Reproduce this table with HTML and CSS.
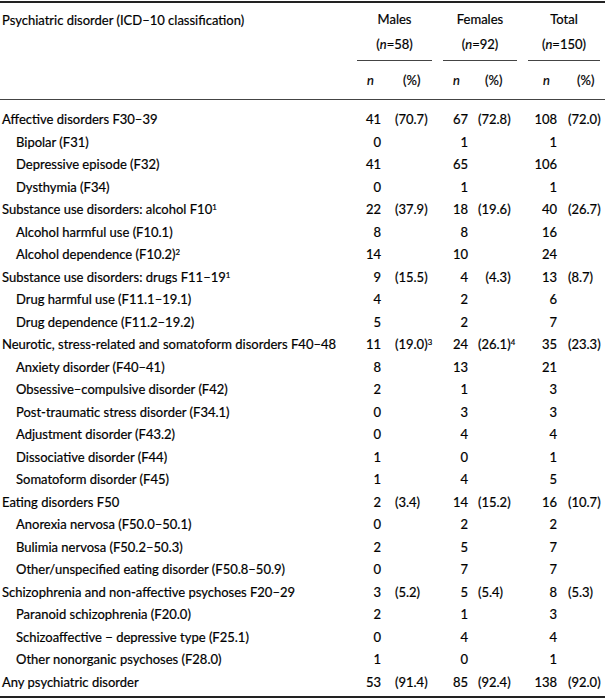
FILE: index.html
```html
<!DOCTYPE html>
<html>
<head>
<meta charset="utf-8">
<link rel="stylesheet" href="styles.css">
</head>
<body>
<div class="tbl">
  <div class="head">
    <div class="hlabel">Psychiatric disorder (ICD–10 classification)</div>
    <div class="grp g-m"><div class="gname">Males</div><div class="gn">(<i>n</i>=58)</div></div>
    <div class="grp g-f"><div class="gname">Females</div><div class="gn">(<i>n</i>=92)</div></div>
    <div class="grp g-t"><div class="gname">Total</div><div class="gn">(<i>n</i>=150)</div></div>
    <div class="sub s-mn"><i>n</i></div><div class="sub s-mp">(%)</div>
    <div class="sub s-fn"><i>n</i></div><div class="sub s-fp">(%)</div>
    <div class="sub s-tn"><i>n</i></div><div class="sub s-tp">(%)</div>
  </div>
  <div class="body">
    <div class="row"><div class="lab">Affective disorders F30–39</div><div class="n">41</div><div class="p pm">(70.7)</div><div class="n">67</div><div class="p pf">(72.8)</div><div class="n">108</div><div class="p pt">(72.0)</div></div>
    <div class="row"><div class="lab ind">Bipolar (F31)</div><div class="n">0</div><div class="p pm"></div><div class="n">1</div><div class="p pf"></div><div class="n">1</div><div class="p pt"></div></div>
    <div class="row"><div class="lab ind">Depressive episode (F32)</div><div class="n">41</div><div class="p pm"></div><div class="n">65</div><div class="p pf"></div><div class="n">106</div><div class="p pt"></div></div>
    <div class="row"><div class="lab ind">Dysthymia (F34)</div><div class="n">0</div><div class="p pm"></div><div class="n">1</div><div class="p pf"></div><div class="n">1</div><div class="p pt"></div></div>
    <div class="row"><div class="lab">Substance use disorders: alcohol F10<sup>1</sup></div><div class="n">22</div><div class="p pm">(37.9)</div><div class="n">18</div><div class="p pf">(19.6)</div><div class="n">40</div><div class="p pt">(26.7)</div></div>
    <div class="row"><div class="lab ind">Alcohol harmful use (F10.1)</div><div class="n">8</div><div class="p pm"></div><div class="n">8</div><div class="p pf"></div><div class="n">16</div><div class="p pt"></div></div>
    <div class="row"><div class="lab ind">Alcohol dependence (F10.2)<sup>2</sup></div><div class="n">14</div><div class="p pm"></div><div class="n">10</div><div class="p pf"></div><div class="n">24</div><div class="p pt"></div></div>
    <div class="row"><div class="lab">Substance use disorders: drugs F11–19<sup>1</sup></div><div class="n">9</div><div class="p pm">(15.5)</div><div class="n">4</div><div class="p pf">&#8199;(4.3)</div><div class="n">13</div><div class="p pt">(8.7)</div></div>
    <div class="row"><div class="lab ind">Drug harmful use (F11.1–19.1)</div><div class="n">4</div><div class="p pm"></div><div class="n">2</div><div class="p pf"></div><div class="n">6</div><div class="p pt"></div></div>
    <div class="row"><div class="lab ind">Drug dependence (F11.2–19.2)</div><div class="n">5</div><div class="p pm"></div><div class="n">2</div><div class="p pf"></div><div class="n">7</div><div class="p pt"></div></div>
    <div class="row"><div class="lab">Neurotic, stress-related and somatoform disorders F40–48</div><div class="n">11</div><div class="p pm">(19.0)<sup>3</sup></div><div class="n">24</div><div class="p pf">(26.1)<sup>4</sup></div><div class="n">35</div><div class="p pt">(23.3)</div></div>
    <div class="row"><div class="lab ind">Anxiety disorder (F40–41)</div><div class="n">8</div><div class="p pm"></div><div class="n">13</div><div class="p pf"></div><div class="n">21</div><div class="p pt"></div></div>
    <div class="row"><div class="lab ind">Obsessive–compulsive disorder (F42)</div><div class="n">2</div><div class="p pm"></div><div class="n">1</div><div class="p pf"></div><div class="n">3</div><div class="p pt"></div></div>
    <div class="row"><div class="lab ind">Post-traumatic stress disorder (F34.1)</div><div class="n">0</div><div class="p pm"></div><div class="n">3</div><div class="p pf"></div><div class="n">3</div><div class="p pt"></div></div>
    <div class="row"><div class="lab ind">Adjustment disorder (F43.2)</div><div class="n">0</div><div class="p pm"></div><div class="n">4</div><div class="p pf"></div><div class="n">4</div><div class="p pt"></div></div>
    <div class="row"><div class="lab ind">Dissociative disorder (F44)</div><div class="n">1</div><div class="p pm"></div><div class="n">0</div><div class="p pf"></div><div class="n">1</div><div class="p pt"></div></div>
    <div class="row"><div class="lab ind">Somatoform disorder (F45)</div><div class="n">1</div><div class="p pm"></div><div class="n">4</div><div class="p pf"></div><div class="n">5</div><div class="p pt"></div></div>
    <div class="row"><div class="lab">Eating disorders F50</div><div class="n">2</div><div class="p pm">(3.4)</div><div class="n">14</div><div class="p pf">(15.2)</div><div class="n">16</div><div class="p pt">(10.7)</div></div>
    <div class="row"><div class="lab ind">Anorexia nervosa (F50.0–50.1)</div><div class="n">0</div><div class="p pm"></div><div class="n">2</div><div class="p pf"></div><div class="n">2</div><div class="p pt"></div></div>
    <div class="row"><div class="lab ind">Bulimia nervosa (F50.2–50.3)</div><div class="n">2</div><div class="p pm"></div><div class="n">5</div><div class="p pf"></div><div class="n">7</div><div class="p pt"></div></div>
    <div class="row"><div class="lab ind">Other/unspecified eating disorder (F50.8–50.9)</div><div class="n">0</div><div class="p pm"></div><div class="n">7</div><div class="p pf"></div><div class="n">7</div><div class="p pt"></div></div>
    <div class="row"><div class="lab">Schizophrenia and non-affective psychoses F20–29</div><div class="n">3</div><div class="p pm">(5.2)</div><div class="n">5</div><div class="p pf">(5.4)</div><div class="n">8</div><div class="p pt">(5.3)</div></div>
    <div class="row"><div class="lab ind">Paranoid schizophrenia (F20.0)</div><div class="n">2</div><div class="p pm"></div><div class="n">1</div><div class="p pf"></div><div class="n">3</div><div class="p pt"></div></div>
    <div class="row"><div class="lab ind">Schizoaffective − depressive type (F25.1)</div><div class="n">0</div><div class="p pm"></div><div class="n">4</div><div class="p pf"></div><div class="n">4</div><div class="p pt"></div></div>
    <div class="row"><div class="lab ind">Other nonorganic psychoses (F28.0)</div><div class="n">1</div><div class="p pm"></div><div class="n">0</div><div class="p pf"></div><div class="n">1</div><div class="p pt"></div></div>
    <div class="row"><div class="lab">Any psychiatric disorder</div><div class="n">53</div><div class="p pm">(91.4)</div><div class="n">85</div><div class="p pf">(92.4)</div><div class="n">138</div><div class="p pt">(92.0)</div></div>
  </div>
</div>
</body>
</html>
```

FILE: styles.css
```css
html, body {
  margin: 0;
  padding: 0;
  background: #fff;
}
body {
  padding-top: 1px;
  font-family: "Lato", "Liberation Sans", sans-serif;
  font-size: 13px;
  color: #000;
  -webkit-text-stroke: 0.2px #000;
}
.tbl {
  width: 605px;
  border-top: 2px solid #222;
  border-bottom: 2px solid #222;
}
.head {
  display: grid;
  grid-template-columns: 352px 32px 52px 35px 51px 38px 45px;
  grid-template-rows: 58px 38px;
  border-bottom: 1px solid #444;
}
.hlabel {
  grid-column: 1;
  grid-row: 1 / 3;
  padding: 8px 0 0 2px;
  line-height: 18px;
}
.grp {
  grid-row: 1;
  text-align: center;
  line-height: 18px;
  padding-top: 6px;
  border-bottom: 1px solid #444;
  align-self: end;
  padding-bottom: 7px;
}
.gn { margin-top: 7px; }
.g-m { grid-column: 2 / 4; margin: 0 4px 0 5px; }
.g-f { grid-column: 4 / 6; margin: 0 5px 0 7px; }
.g-t { grid-column: 6 / 8; margin: 0 5px 0 6px; }
.sub {
  grid-row: 2;
  line-height: 18px;
  align-self: center;
}
.s-mn { grid-column: 2; text-align: right; padding-right: 10px; }
.s-mp { grid-column: 3; padding-left: 19px; }
.s-fn { grid-column: 4; text-align: right; padding-right: 11px; }
.s-fp { grid-column: 5; padding-left: 14px; }
.s-tn { grid-column: 6; text-align: right; padding-right: 10px; }
.s-tp { grid-column: 7; padding-left: 17px; }
.body {
  padding: 8px 0 3px;
}
.row {
  display: grid;
  grid-template-columns: 352px 32px 52px 35px 51px 38px 45px;
  height: 22.5px;
  align-items: center;
  line-height: 16px;
}
.lab { padding-left: 2px; white-space: nowrap; }
.lab.ind { padding-left: 16px; }
.n { text-align: right; padding-right: 3px; }
.pm { padding-left: 11px; }
.pf { padding-left: 7px; }
.pt { padding-left: 8px; }
sup {
  font-size: 0.6em;
  line-height: 0;
  vertical-align: 0.55em;
}
```
